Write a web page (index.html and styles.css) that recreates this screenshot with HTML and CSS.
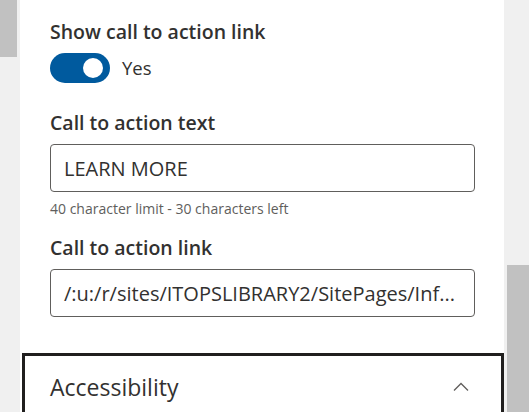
FILE: index.html
```html
<!DOCTYPE html>
<html>
<head>
<meta charset="utf-8">
<link rel="stylesheet" href="styles.css">
</head>
<body>
<div class="frame">
  <div class="gutter-left"><div class="thumb-left"></div></div>
  <div class="panel">
    <div class="field toggle-field">
      <div class="label">Show call to action link</div>
      <div class="toggle-row">
        <div class="toggle"><div class="knob"></div></div>
        <span class="toggle-text">Yes</span>
      </div>
    </div>
    <div class="field">
      <div class="label">Call to action text</div>
      <div class="input">LEARN MORE</div>
      <div class="helper">40 character limit - 30 characters left</div>
    </div>
    <div class="field">
      <div class="label">Call to action link</div>
      <div class="input">/:u:/r/sites/ITOPSLIBRARY2/SitePages/Inf...</div>
    </div>
    <div class="section">
      <span class="section-title">Accessibility</span>
      <svg class="chevron" width="16" height="10" viewBox="0 0 16 10"><path d="M1 8.5 L8 1.5 L15 8.5" fill="none" stroke="#605e5c" stroke-width="1.3"/></svg>
    </div>
  </div>
  <div class="gutter-right"><div class="thumb-right"></div></div>
</div>
</body>
</html>
```
FILE: styles.css
```css
html, body {
  margin: 0;
  padding: 0;
  width: 529px;
  height: 412px;
  overflow: hidden;
  background: #f0f0f0;
  font-family: "Open Sans", "Noto Sans", sans-serif;
  color: #323130;
}
.frame {
  display: flex;
  height: 412px;
}
.gutter-left {
  width: 20px;
  flex: none;
  background: #f0f0f0;
}
.thumb-left {
  width: 17px;
  height: 57px;
  background: #c1c1c1;
}
.gutter-right {
  width: 25px;
  flex: none;
  background: #f0f0f0;
  padding-top: 265px;
  padding-left: 3px;
  box-sizing: border-box;
}
.thumb-right {
  width: 22px;
  height: 147px;
  background: #c1c1c1;
}
.panel {
  flex: 1;
  background: #fff;
  padding: 19px 29px 0 30px;
  overflow: hidden;
}
.label {
  font-size: 19.5px;
  font-weight: 600;
  line-height: 26px;
  color: #323130;
}
.toggle-row {
  display: flex;
  align-items: center;
  margin-top: 8px;
  gap: 12px;
}
.toggle {
  width: 60px;
  height: 30px;
  border-radius: 15px;
  background: #005a9e;
  position: relative;
}
.knob {
  position: absolute;
  width: 20px;
  height: 20px;
  border-radius: 50%;
  background: #fff;
  top: 5px;
  right: 7px;
}
.toggle-text {
  font-size: 18.5px;
  color: #323130;
  line-height: 30px;
}
.toggle-field {
  margin-bottom: 27px;
}
.input {
  margin-top: 8px;
  height: 48px;
  box-sizing: border-box;
  border: 1px solid #605e5c;
  border-radius: 4px;
  padding: 0 13px;
  display: flex;
  align-items: center;
  font-size: 20px;
  color: #323130;
  white-space: nowrap;
  overflow: hidden;
}
.helper {
  font-size: 14px;
  color: #605e5c;
  margin-top: 8px;
  line-height: 18px;
  margin-bottom: 17px;
}
.section {
  margin-top: 36px;
  margin-left: -28px;
  margin-right: -29px;
  border: 3px solid #201f1e;
  border-bottom: none;
  height: 80px;
  display: flex;
  align-items: flex-start;
  justify-content: space-between;
  padding: 16px 32px 0 25px;
}
.section-title {
  font-size: 23px;
  color: #323130;
  line-height: 30px;
}
.chevron {
  margin-top: 10px;
}
```
